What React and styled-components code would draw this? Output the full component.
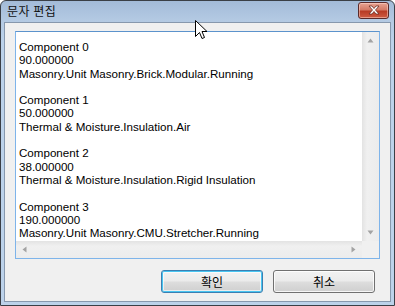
import React from "react";
import styled, { createGlobalStyle } from "styled-components";

const GlobalStyle = createGlobalStyle`
  html, body {
    margin: 0;
    padding: 0;
    background: #ffffff;
  }
  body {
    font-family: "Liberation Sans", Arial, sans-serif;
  }
`;

const Window = styled.div`
  position: relative;
  box-sizing: border-box;
  width: 395px;
  height: 306px;
  display: flex;
  flex-direction: column;
  border: 1px solid #3a3f46;
  border-radius: 6px 6px 0 0;
  background: linear-gradient(#a3bbd8 0px, #b4cae3 20px, #bcd2ea 40px, #bcd2ea 100%);
  padding: 0 3px 3px 3px;
`;

const TitleBar = styled.div`
  height: 24px;
  display: flex;
  align-items: center;
  justify-content: space-between;
  padding: 0 2px 0 3px;
`;

const Title = styled.span`
  font-family: "Noto Sans CJK KR", "Liberation Sans", sans-serif;
  font-size: 12px;
  color: #111;
  letter-spacing: 0.5px;
  margin-top: -2px;
`;

const CloseButton = styled.div`
  box-sizing: border-box;
  width: 31px;
  height: 17px;
  margin-top: -3px;
  border: 1px solid #5a2a2a;
  border-radius: 3px;
  background: linear-gradient(#e8a493 0%, #d47a66 45%, #b83b25 55%, #cf5c43 100%);
  display: flex;
  align-items: center;
  justify-content: center;
  box-shadow: inset 0 0 0 1px rgba(255, 220, 210, 0.5);
`;

const Client = styled.div`
  flex: 1;
  display: flex;
  flex-direction: column;
  background: #f0f0f0;
  border: 1px solid #8798ad;
  padding: 8px 10px 8px 10px;
  gap: 11px;
`;

const EditBox = styled.div`
  box-sizing: border-box;
  height: 228px;
  display: grid;
  grid-template-columns: 1fr 17px;
  grid-template-rows: 1fr 17px;
  border: 1px solid #7eb4ea;
  border-top-color: #5c93cc;
  background: #ffffff;
`;

const TextArea = styled.div`
  overflow: hidden;
  padding: 8px 0 0 3px;
  font-family: "Liberation Sans", Arial, sans-serif;
  font-size: 11.6px;
  color: #000;
  white-space: pre;
`;

const Line = styled.div`
  height: 13.3px;
  line-height: 13.3px;
`;

const ScrollTrack = styled.div`
  display: flex;
  flex-direction: ${(p) => (p.$vertical ? "column" : "row")};
  justify-content: space-between;
  align-items: center;
  background: ${(p) =>
    p.$vertical
      ? "linear-gradient(90deg, #e3e3e3, #f0f0f0 30%, #ececec)"
      : "linear-gradient(#e3e3e3, #f0f0f0 30%, #ececec)"};
`;

const ArrowCell = styled.div`
  width: 17px;
  height: 17px;
  display: flex;
  align-items: center;
  justify-content: center;
`;

const Corner = styled.div`
  background: #f0f0f0;
`;

const ButtonRow = styled.div`
  display: flex;
  justify-content: flex-end;
  gap: 10px;
  padding-right: 5px;
`;

const Button = styled.button`
  box-sizing: border-box;
  width: 102px;
  height: 23px;
  border-radius: 3px;
  border: 1px solid ${(p) => (p.$default ? "#3c7fb1" : "#707070")};
  background: linear-gradient(#f2f2f2 0%, #ebebeb 48%, #dddddd 52%, #cfcfcf 100%);
  box-shadow: ${(p) =>
    p.$default
      ? "inset 0 0 0 1px #48c5f1, inset 0 0 0 2px rgba(255,255,255,0.6)"
      : "inset 0 0 0 1px rgba(255,255,255,0.8)"};
  font-family: "Noto Sans CJK KR", "Liberation Sans", sans-serif;
  font-size: 12px;
  color: #000;
  padding: 0;
  line-height: 20px;
`;

const Cursor = styled.svg`
  position: absolute;
  left: 194px;
  top: 19px;
`;

const lines = [
  "Component 0",
  "90.000000",
  "Masonry.Unit Masonry.Brick.Modular.Running",
  "",
  "Component 1",
  "50.000000",
  "Thermal & Moisture.Insulation.Air",
  "",
  "Component 2",
  "38.000000",
  "Thermal & Moisture.Insulation.Rigid Insulation",
  "",
  "Component 3",
  "190.000000",
  "Masonry.Unit Masonry.CMU.Stretcher.Running",
];

const Tri = ({ dir }) => {
  const pts = {
    up: "0.5,4.5 3.5,0.5 6.5,4.5",
    down: "0.5,0.5 6.5,0.5 3.5,4.5",
    left: "4.5,0.5 4.5,6.5 0.5,3.5",
    right: "0.5,0.5 0.5,6.5 4.5,3.5",
  }[dir];
  const vert = dir === "up" || dir === "down";
  return (
    <svg width={vert ? 7 : 5} height={vert ? 5 : 7}>
      <polygon points={pts} fill="#a3a3a3" />
    </svg>
  );
};

export default function App() {
  return (
    <>
      <GlobalStyle />
      <Window>
        <TitleBar>
          <Title>문자 편집</Title>
          <CloseButton>
            <svg width="14" height="10" viewBox="0 0 14 10">
              <path
                d="M2 1 L5 1 L7 3.5 L9 1 L12 1 L8.5 5 L12 9 L9 9 L7 6.5 L5 9 L2 9 L5.5 5 Z"
                fill="#ffffff"
                stroke="#6b2b22"
                strokeWidth="0.8"
              />
            </svg>
          </CloseButton>
        </TitleBar>
        <Client>
          <EditBox>
            <TextArea>
              {lines.map((l, i) => (
                <Line key={i}>{l}</Line>
              ))}
            </TextArea>
            <ScrollTrack $vertical>
              <ArrowCell>
                <Tri dir="up" />
              </ArrowCell>
              <ArrowCell>
                <Tri dir="down" />
              </ArrowCell>
            </ScrollTrack>
            <ScrollTrack>
              <ArrowCell>
                <Tri dir="left" />
              </ArrowCell>
              <ArrowCell>
                <Tri dir="right" />
              </ArrowCell>
            </ScrollTrack>
            <Corner />
          </EditBox>
          <ButtonRow>
            <Button $default>확인</Button>
            <Button>취소</Button>
          </ButtonRow>
        </Client>
        <Cursor width="13" height="21" viewBox="0 0 13 21">
          <path
            d="M0.5 0.5 L0.5 16.5 L4.5 12.5 L7 18.5 L9.5 17.5 L7 11.5 L12 11.5 Z"
            fill="#ffffff"
            stroke="#000000"
            strokeWidth="1"
          />
        </Cursor>
      </Window>
    </>
  );
}
